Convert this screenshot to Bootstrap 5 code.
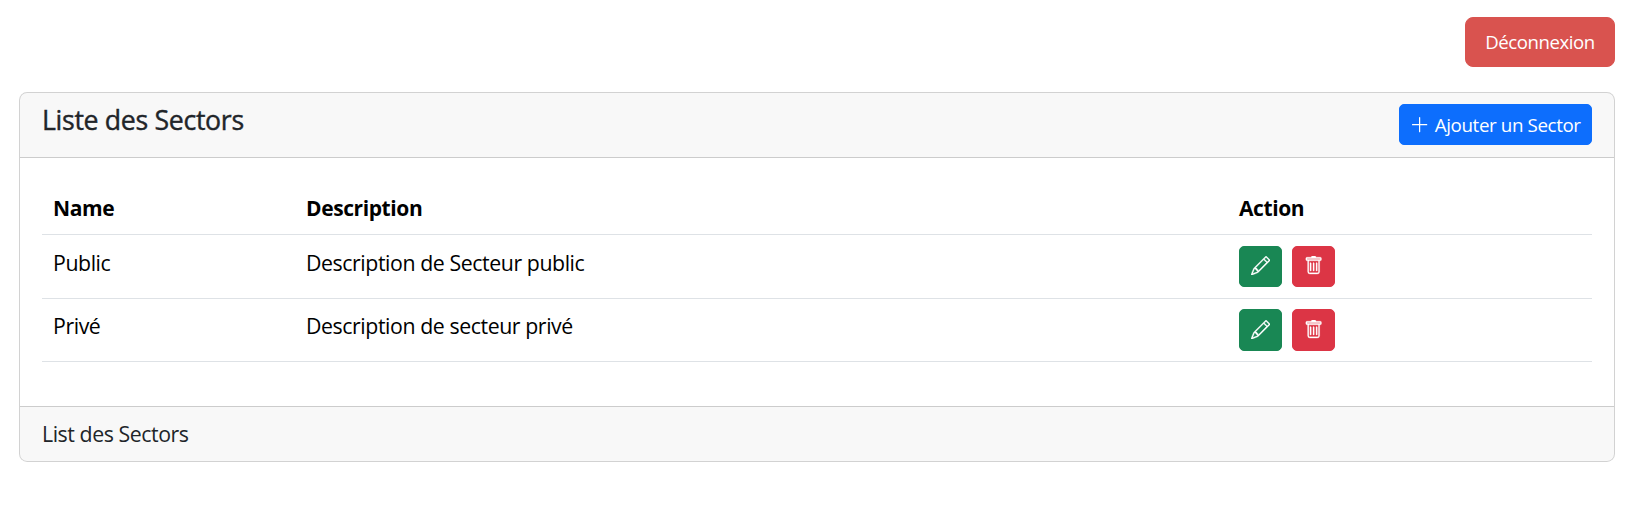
<!DOCTYPE html>
<html lang="fr">
<head>
<meta charset="utf-8">
<meta name="viewport" content="width=device-width, initial-scale=1">
<title>Liste des Sectors</title>
<link rel="stylesheet" href="https://cdn.jsdelivr.net/npm/bootstrap@5.3.0/dist/css/bootstrap.min.css">
<style>
  html { font-size: 22px; }
  body { font-family: "Segoe UI", "Open Sans", sans-serif; color: #212529; overflow: hidden; }
  .page { padding: 17px 26px 0 19px; }
  .btn-logout { --bs-btn-color: #fff; --bs-btn-bg: #d9534f; --bs-btn-border-color: #d9534f; width: 150px; height: 50px; padding: 0; border-radius: 8px; font-size: 18.6px; letter-spacing: -.43px; }
  .card { margin-top: 25px; height: 370px; }
  .card-header { height: 65px; }
  .card-body { padding-top: 23px; padding-bottom: 0; }
  .card-footer { height: 55px; padding-top: 10px; font-size: 21.3px; line-height: 33px; letter-spacing: -.44px; }
  .title { font-size: 26.7px; line-height: 31px; font-weight: 500; letter-spacing: -.33px; -webkit-text-stroke: .4px currentColor; }
  .btn-sm { font-size: 19.25px; height: 41px; --bs-btn-border-radius: 5px; }
  .btn-add { width: 193px; padding: 2px 0 0 10px; text-align: left; white-space: nowrap; }
  .btn-add span { font-size: 18.8px; letter-spacing: -.4px; }
  .btn-icon { width: 43px; padding: 0; }
  .sectors { table-layout: fixed; color: #000; --bs-table-color: #000; font-size: 21.3px; line-height: 33px; letter-spacing: -.42px; }
  .sectors .col-name { width: 253px; }
  .sectors .col-desc { width: 933px; }
  .sectors th { padding-top: 12px; padding-bottom: 10px; font-size: 21px; line-height: 31px; letter-spacing: -.4px; }
  .sectors tbody tr:last-child td { padding-top: 10px; padding-bottom: 10px; }
  .sectors tbody tr:last-child .btn { height: 42px; }
  .actions { gap: 10px; }
  .bi { width: 1em; height: 1em; vertical-align: -.125em; fill: currentColor; stroke: currentColor; stroke-width: .25; }
  .bi-plus { stroke: none; position: relative; top: -1px; }
</style>
</head>
<body>
<svg class="d-none" xmlns="http://www.w3.org/2000/svg">
  <symbol id="plus" viewBox="0 0 16 16"><path d="M8 1.6a.5.5 0 0 1 .5.5v5.4h5.4a.5.5 0 0 1 0 1H8.500v5.400a.5.5 0 0 1-1 0V8.500H2.100a.5.5 0 0 1 0-1h5.400V2.100A.5.5 0 0 1 8 1.6Z"/></symbol>
  <symbol id="pencil" viewBox="0 0 16 16"><path d="M12.146.146a.5.5 0 0 1 .708 0l3 3a.5.5 0 0 1 0 .708l-10 10a.5.5 0 0 1-.168.11l-5 2a.5.5 0 0 1-.65-.65l2-5a.5.5 0 0 1 .11-.168l10-10zM11.207 2.5 13.5 4.793 14.793 3.5 12.5 1.207 11.207 2.5zm1.586 3L10.5 3.207 4 9.707V10h.5a.5.5 0 0 1 .5.5v.5h.5a.5.5 0 0 1 .5.5v.5h.293l6.5-6.5zm-9.761 5.175-.106.106-1.528 3.821 3.821-1.528.106-.106A.5.5 0 0 1 5 12.5V12h-.5a.5.5 0 0 1-.5-.5V11h-.5a.5.5 0 0 1-.468-.325z"/></symbol>
  <symbol id="trash" viewBox="0 0 16 16"><path d="M5.5 5.5A.5.5 0 0 1 6 6v6a.5.5 0 0 1-1 0V6a.5.5 0 0 1 .5-.5Zm2.5 0a.5.5 0 0 1 .5.5v6a.5.5 0 0 1-1 0V6a.5.5 0 0 1 .5-.5Zm3 .5a.5.5 0 0 0-1 0v6a.5.5 0 0 0 1 0V6Z"/><path d="M14.5 3a1 1 0 0 1-1 1H13v9a2 2 0 0 1-2 2H5a2 2 0 0 1-2-2V4h-.5a1 1 0 0 1-1-1V2a1 1 0 0 1 1-1H6a1 1 0 0 1 1-1h2a1 1 0 0 1 1 1h3.5a1 1 0 0 1 1 1v1ZM4.118 4 4 4.059V13a1 1 0 0 0 1 1h6a1 1 0 0 0 1-1V4.059L11.882 4H4.118ZM2.5 3h11V2h-11v1Z"/><path d="M2.5 2h11v1h-11z" opacity=".5" stroke="none"/></symbol>
</svg>
<div class="page">
  <div class="d-flex justify-content-end">
    <button type="button" class="btn btn-logout">Déconnexion</button>
  </div>
  <div class="card">
    <div class="card-header d-flex justify-content-between align-items-start">
      <h4 class="title mb-0">Liste des Sectors</h4>
      <a href="#" class="btn btn-primary btn-sm btn-add d-flex align-items-center"><svg class="bi bi-plus me-1"><use href="#plus"/></svg><span>Ajouter un Sector</span></a>
    </div>
    <div class="card-body">
      <table class="table sectors mb-0">
        <colgroup><col class="col-name"><col class="col-desc"><col></colgroup>
        <thead><tr><th>Name</th><th>Description</th><th>Action</th></tr></thead>
        <tbody>
          <tr>
            <td>Public</td><td>Description de Secteur public</td>
            <td><div class="d-flex actions"><button type="button" class="btn btn-success btn-sm btn-icon" aria-label="Modifier"><svg class="bi"><use href="#pencil"/></svg></button><button type="button" class="btn btn-danger btn-sm btn-icon" aria-label="Supprimer"><svg class="bi"><use href="#trash"/></svg></button></div></td>
          </tr>
          <tr>
            <td>Privé</td><td>Description de secteur privé</td>
            <td><div class="d-flex actions"><button type="button" class="btn btn-success btn-sm btn-icon" aria-label="Modifier"><svg class="bi"><use href="#pencil"/></svg></button><button type="button" class="btn btn-danger btn-sm btn-icon" aria-label="Supprimer"><svg class="bi"><use href="#trash"/></svg></button></div></td>
          </tr>
        </tbody>
      </table>
    </div>
    <div class="card-footer">List des Sectors</div>
  </div>
</div>
<script src="https://cdn.jsdelivr.net/npm/bootstrap@5.3.0/dist/js/bootstrap.bundle.min.js"></script>
</body>
</html>
